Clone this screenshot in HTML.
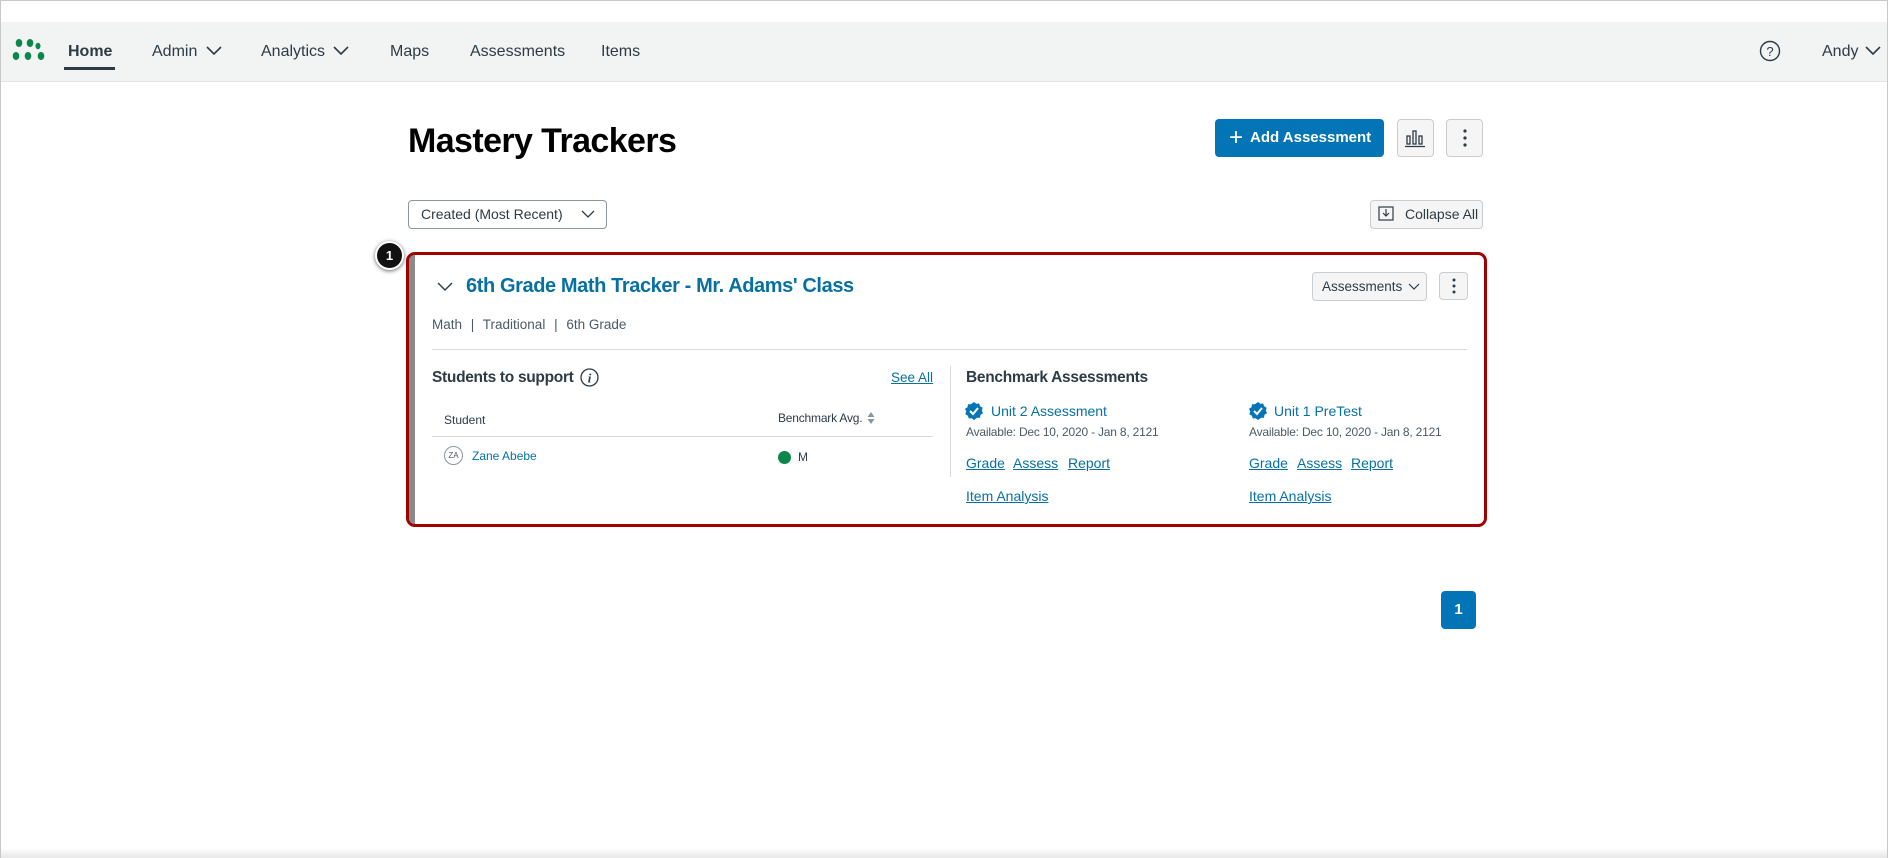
<!DOCTYPE html>
<html><head><meta charset="utf-8">
<style>
*{box-sizing:border-box;margin:0;padding:0}
body{width:1888px;height:858px;position:relative;background:#fff;font-family:"Liberation Sans",sans-serif;color:#2d3b45;overflow:hidden}
.a{position:absolute;white-space:nowrap}
.frame{position:absolute;left:0;top:0;width:1888px;height:858px;border:1px solid #c8c8c8;border-bottom:none;pointer-events:none}
.nav{position:absolute;left:1px;top:22px;width:1886px;height:60px;background:#f2f3f3;border-bottom:1px solid #e2e4e4}
.nt{font-size:16px;color:#2d3b45;top:43px}
.btn{position:absolute;background:#f5f5f5;border:1px solid #c7cdd1;border-radius:4px}
.link{color:#0770a3;text-decoration:underline}
.blue{color:#0770a3}
</style></head><body>
<div class="nav"></div>
<svg class="a" style="left:11px;top:38px" width="36" height="24" viewBox="0 0 36 24"><g fill="#0b874b"><ellipse cx="8" cy="5" rx="3.3" ry="4"/><ellipse cx="19" cy="5" rx="3.3" ry="4"/><ellipse cx="5" cy="18" rx="3.3" ry="4"/><ellipse cx="17" cy="18" rx="3.3" ry="4"/><ellipse cx="30" cy="18" rx="3.3" ry="4"/><ellipse cx="27" cy="8" rx="2.5" ry="3.2"/></g></svg>
<div class="a nt" style="left:68px;font-weight:bold">Home</div>
<div class="a" style="left:64px;top:67px;width:51px;height:3px;background:#2d3b45"></div>
<div class="a nt" style="left:152px">Admin</div>
<svg class="a" style="left:206px;top:46px" width="16" height="10"><path d="M1 1l7 7 7-7" stroke="#2d3b45" stroke-width="1.6" fill="none"/></svg>
<div class="a nt" style="left:261px">Analytics</div>
<svg class="a" style="left:333px;top:46px" width="16" height="10"><path d="M1 1l7 7 7-7" stroke="#2d3b45" stroke-width="1.6" fill="none"/></svg>
<div class="a nt" style="left:390px">Maps</div>
<div class="a nt" style="left:470px">Assessments</div>
<div class="a nt" style="left:601px">Items</div>
<svg class="a" style="left:1759px;top:40px" width="22" height="22"><circle cx="11" cy="11" r="9.5" stroke="#2d3b45" stroke-width="1.4" fill="none"/><text x="11" y="16" font-size="13" text-anchor="middle" fill="#2d3b45" font-family="Liberation Sans">?</text></svg>
<div class="a nt" style="left:1822px">Andy</div>
<svg class="a" style="left:1865px;top:46px" width="16" height="10"><path d="M1 1l7 7 7-7" stroke="#2d3b45" stroke-width="1.6" fill="none"/></svg>

<div class="a" style="left:408px;top:122px;font-size:34px;font-weight:bold;color:#000;letter-spacing:-0.6px">Mastery Trackers</div>
<div class="a" style="left:1215px;top:119px;width:169px;height:38px;background:#0374b5;border-radius:4px;color:#fff;font-size:15px;font-weight:bold;line-height:38px;padding-left:14px"><span style="font-weight:normal;font-size:24px;vertical-align:-3px;margin-right:7px">+</span>Add Assessment</div>
<div class="btn" style="left:1397px;top:119px;width:37px;height:38px"></div>
<svg class="a" style="left:1405px;top:128px" width="22" height="20"><g stroke="#2d3b45" stroke-width="1.3" fill="none"><rect x="2" y="8" width="3" height="8"/><rect x="8" y="3" width="3" height="13"/><rect x="14" y="8" width="3" height="8"/><path d="M0 18.5h20"/></g></svg>
<div class="btn" style="left:1446px;top:119px;width:37px;height:38px"></div>
<svg class="a" style="left:1462px;top:127px" width="6" height="22"><circle cx="3" cy="4" r="1.6" fill="#2d3b45"/><circle cx="3" cy="11" r="1.6" fill="#2d3b45"/><circle cx="3" cy="18" r="1.6" fill="#2d3b45"/></svg>

<div class="a" style="left:408px;top:200px;width:199px;height:29px;border:1px solid #8b969e;border-radius:4px;font-size:14px;line-height:27px;padding-left:12px">Created (Most Recent)</div>
<svg class="a" style="left:581px;top:210px" width="14" height="9"><path d="M1 1l6 6 6-6" stroke="#2d3b45" stroke-width="1.3" fill="none"/></svg>
<div class="btn" style="left:1370px;top:200px;width:113px;height:29px;font-size:14px;line-height:27px;padding-left:34px">Collapse All</div>
<svg class="a" style="left:1378px;top:206px" width="16" height="16"><g stroke="#2d3b45" stroke-width="1.2" fill="none"><rect x="1" y="1" width="14" height="13"/><path d="M8 3v7M5 7l3 3 3-3"/></g></svg>

<div class="a" style="left:406px;top:252px;width:1081px;height:275px;border:3px solid #a30000;border-radius:9px;overflow:hidden;background:#fff">
  <div style="position:absolute;left:0;top:0;width:6px;height:100%;background:#8b8b8b"></div>
</div>
<div class="a" style="left:375px;top:241px;width:29px;height:29px;border-radius:50%;background:#111;border:2px solid #fff;box-shadow:0 1px 4px rgba(0,0,0,.6);color:#fff;font-size:13px;font-weight:bold;text-align:center;line-height:25px">1</div>

<svg class="a" style="left:437px;top:282px" width="16" height="10"><path d="M1 1l7 7 7-7" stroke="#2d3b45" stroke-width="1.4" fill="none"/></svg>
<div class="a blue" style="left:466px;top:275px;font-size:20px;font-weight:bold;letter-spacing:-0.4px">6th Grade Math Tracker - Mr. Adams' Class</div>
<div class="a" style="left:432px;top:317px;font-size:13.5px;color:#4b5a64">Math <span style="margin:0 5px">|</span> Traditional <span style="margin:0 5px">|</span> 6th Grade</div>
<div class="btn" style="left:1312px;top:272px;width:115px;height:29px;font-size:13.5px;line-height:27px;padding-left:9px">Assessments</div>
<svg class="a" style="left:1408px;top:283px" width="12" height="8"><path d="M1 1l5 5 5-5" stroke="#2d3b45" stroke-width="1.2" fill="none"/></svg>
<div class="btn" style="left:1439px;top:272px;width:29px;height:28px"></div>
<svg class="a" style="left:1451px;top:277px" width="6" height="18"><circle cx="3" cy="3" r="1.5" fill="#2d3b45"/><circle cx="3" cy="9" r="1.5" fill="#2d3b45"/><circle cx="3" cy="15" r="1.5" fill="#2d3b45"/></svg>
<div class="a" style="left:432px;top:349px;width:1035px;height:1px;background:#d7dadd"></div>

<div class="a" style="left:432px;top:369px;font-size:15.5px;font-weight:bold;letter-spacing:-0.3px">Students to support</div>
<svg class="a" style="left:580px;top:368px" width="19" height="19"><circle cx="9.5" cy="9.5" r="8.5" stroke="#2d3b45" stroke-width="1.3" fill="none"/><text x="9.5" y="14.5" font-size="13" font-style="italic" font-weight="bold" text-anchor="middle" fill="#2d3b45" font-family="Liberation Serif">i</text></svg>
<div class="a link" style="left:891px;top:370px;font-size:13.5px">See All</div>
<div class="a" style="left:950px;top:366px;width:1px;height:111px;background:#d7dadd"></div>
<div class="a" style="left:444px;top:413px;font-size:12px">Student</div>
<div class="a" style="left:778px;top:411px;font-size:12px;letter-spacing:-0.2px">Benchmark Avg.</div>
<svg class="a" style="left:867px;top:412px" width="8" height="12"><path d="M4 0l3.5 5h-7zM4 12l3.5-5h-7z" fill="#8b969e"/></svg>
<div class="a" style="left:432px;top:436px;width:501px;height:1px;background:#d7dadd"></div>
<div class="a" style="left:444px;top:446px;width:19px;height:19px;border:1px solid #8b969e;border-radius:50%;font-size:8px;line-height:17px;text-align:center;color:#4b5a64">ZA</div>
<div class="a blue" style="left:472px;top:449px;font-size:12px">Zane Abebe</div>
<div class="a" style="left:778px;top:451px;width:13px;height:13px;border-radius:50%;background:#0b874b"></div>
<div class="a" style="left:798px;top:450px;font-size:12px">M</div>

<div class="a" style="left:966px;top:369px;font-size:15.5px;font-weight:bold;letter-spacing:-0.3px">Benchmark Assessments</div>
<svg class="a" style="left:965px;top:402px" width="18" height="18" viewBox="0 0 18 18"><path d="M9 0l2.3 1.8 2.9-.3.9 2.8 2.6 1.4-.9 2.8 1.2 2.7-2.5 1.6-.5 2.9-2.9.1L9 18l-2.3-1.8-2.9.3-.9-2.8L.3 12.3l.9-2.8L0 6.8l2.5-1.6.5-2.9 2.9-.1z" fill="#0374b5"/><path d="M5 9l3 3 5-6" stroke="#fff" stroke-width="2" fill="none"/></svg>
<div class="a blue" style="left:991px;top:403px;font-size:14px">Unit 2 Assessment</div>
<div class="a" style="left:966px;top:425px;font-size:12px;color:#4b5a64;letter-spacing:-0.2px">Available: Dec 10, 2020 - Jan 8, 2121</div>
<div class="a link" style="left:966px;top:455px;font-size:14px">Grade</div>
<div class="a link" style="left:1013px;top:455px;font-size:14px">Assess</div>
<div class="a link" style="left:1068px;top:455px;font-size:14px">Report</div>
<div class="a link" style="left:966px;top:488px;font-size:14px">Item Analysis</div>

<svg class="a" style="left:1249px;top:402px" width="18" height="18" viewBox="0 0 18 18"><path d="M9 0l2.3 1.8 2.9-.3.9 2.8 2.6 1.4-.9 2.8 1.2 2.7-2.5 1.6-.5 2.9-2.9.1L9 18l-2.3-1.8-2.9.3-.9-2.8L.3 12.3l.9-2.8L0 6.8l2.5-1.6.5-2.9 2.9-.1z" fill="#0374b5"/><path d="M5 9l3 3 5-6" stroke="#fff" stroke-width="2" fill="none"/></svg>
<div class="a blue" style="left:1274px;top:403px;font-size:14px">Unit 1 PreTest</div>
<div class="a" style="left:1249px;top:425px;font-size:12px;color:#4b5a64;letter-spacing:-0.2px">Available: Dec 10, 2020 - Jan 8, 2121</div>
<div class="a link" style="left:1249px;top:455px;font-size:14px">Grade</div>
<div class="a link" style="left:1297px;top:455px;font-size:14px">Assess</div>
<div class="a link" style="left:1351px;top:455px;font-size:14px">Report</div>
<div class="a link" style="left:1249px;top:488px;font-size:14px">Item Analysis</div>

<div class="a" style="left:1441px;top:591px;width:35px;height:38px;background:#0374b5;border-radius:4px;color:#fff;font-size:15px;font-weight:bold;text-align:center;line-height:38px">1</div>
<div class="a" style="left:0;top:848px;width:1888px;height:10px;background:linear-gradient(#fff,#e6e6e6)"></div>
<div class="frame"></div>
</body></html>
